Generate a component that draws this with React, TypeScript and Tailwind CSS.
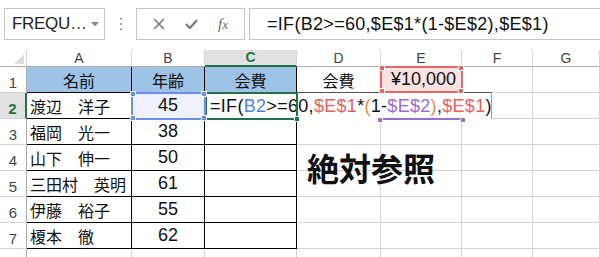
import React from "react";

const FONT = { fontFamily: '"Liberation Sans", "Noto Sans CJK JP", sans-serif' };
const JP = { fontFamily: '"Noto Sans CJK JP", "Liberation Sans", sans-serif' };

const COLS = ["A", "B", "C", "D", "E", "F", "G"];

const PEOPLE: [string, number][] = [
  ["渡辺　洋子", 45],
  ["福岡　光一", 38],
  ["山下　伸一", 50],
  ["三田村　英明", 61],
  ["伊藤　裕子", 55],
  ["榎本　徹", 62],
];

function Formula() {
  return (
    <>
      <span>=IF(</span>
      <span className="text-[#4f7fee]">B2</span>
      <span>&gt;=60,</span>
      <span className="text-[#ec5f5c]">$E$1</span>
      <span>*</span>
      <span className="text-[#e98a4f]">(</span>
      <span>1-</span>
      <span className="text-[#9a6bd3]">$E$2</span>
      <span className="text-[#e98a4f]">)</span>
      <span>,</span>
      <span className="text-[#ec5f5c]">$E$1</span>
      <span>)</span>
    </>
  );
}

// reference highlight box with square handles on its corners
function RefBox({ className, color, bottomOnly }: { className: string; color: string; bottomOnly?: boolean }) {
  const h = "absolute w-[6px] h-[6px] border border-white";
  return (
    <div className={"absolute " + className}>
      {!bottomOnly && <div className={h + " -left-[3px] -top-[3px]"} style={{ background: color }} />}
      {!bottomOnly && <div className={h + " -right-[3px] -top-[3px]"} style={{ background: color }} />}
      <div className={h + " -left-[3px] -bottom-[3px]"} style={{ background: color }} />
      <div className={h + " -right-[3px] -bottom-[3px]"} style={{ background: color }} />
    </div>
  );
}

function Toolbar() {
  return (
    <div className="flex items-start h-[50px] pt-[8px]" style={FONT}>
      <div className="ml-[4px] w-[101px] h-[32px] border border-[#c6c6c6] flex items-center pl-[7px] pr-[5px] justify-between">
        <span className="text-[17px] text-[#222] tracking-[-0.3px]">FREQU…</span>
        <svg width="8" height="5" viewBox="0 0 8 5"><path d="M0 0h8L4 4.5z" fill="#8a8a8a" /></svg>
      </div>
      <div className="w-[31px] h-[32px] flex flex-col items-center justify-center gap-[3px]">
        <div className="w-[2px] h-[2px] bg-[#a8a8a8]" />
        <div className="w-[2px] h-[2px] bg-[#a8a8a8]" />
        <div className="w-[2px] h-[2px] bg-[#a8a8a8]" />
      </div>
      <div className="w-[109px] h-[32px] border border-[#c6c6c6] flex items-center justify-around px-[6px]">
        <svg width="12" height="12" viewBox="0 0 12 12"><path d="M1 1l10 10M11 1L1 11" stroke="#7a7a7a" strokeWidth="1.6" /></svg>
        <svg width="13" height="10" viewBox="0 0 13 10"><path d="M1 5l4 4 7-8" stroke="#7a7a7a" strokeWidth="2.2" fill="none" /></svg>
        <span className="text-[15px] italic text-[#666]" style={{ fontFamily: '"Liberation Serif", serif' }}>f<span className="text-[13px]">x</span></span>
      </div>
      <div className="ml-[4px] flex-1 h-[32px] border border-r-0 border-[#c6c6c6] flex items-center pl-[17px] text-[18px] tracking-[0.3px] text-[#111] whitespace-nowrap">
        =IF(B2&gt;=60,$E$1*(1-$E$2),$E$1)
      </div>
    </div>
  );
}

export default function App() {
  const cells: React.ReactNode[] = [];

  // header row
  cells.push(
    <div key="corner" className="flex items-end justify-end p-[2px] border-r border-b border-r-[#d4d4d4] border-b-[#ababab] bg-white">
      <svg width="10" height="10" viewBox="0 0 10 10"><path d="M10 0v10H0z" fill="#dcdcdc" /></svg>
    </div>
  );
  COLS.forEach((c) => {
    const sel = c === "C";
    cells.push(
      <div
        key={"h" + c}
        className={
          "flex items-end justify-center pb-[1px] text-[14px] leading-none border-r border-r-[#d4d4d4] " +
          (sel ? "bg-[#e1e1e1] text-[#217346] font-bold border-b-2 border-b-[#217346]" : "bg-white text-[#444] border-b border-b-[#ababab]")
        }
      >
        {c}
      </div>
    );
  });

  for (let r = 1; r <= 8; r++) {
    const selRow = r === 2;
    cells.push(
      <div
        key={"r" + r}
        className={
          "flex items-end justify-center pb-[2px] text-[15px] leading-none border-b border-b-[#d4d4d4] " +
          (selRow ? "bg-[#e1e1e1] text-[#217346] font-bold border-r-2 border-r-[#217346]" : "bg-white text-[#444] border-r border-r-[#ababab]")
        }
      >
        {r <= 7 ? r : ""}
      </div>
    );
    COLS.forEach((c, ci) => {
      const inTable = ci <= 2 && r <= 7;
      let cls = "flex items-center text-[#111] ";
      cls += inTable ? "border-r border-b border-black " : "border-r border-b border-[#d4d4d4] ";
      let content: React.ReactNode = null;
      if (r === 1 && ci <= 2) {
        cls += "bg-[#9dc3e6] justify-center";
        content = <span className="text-[16px]" style={JP}>{["名前", "年齢", "会費"][ci]}</span>;
      } else if (r === 1 && c === "D") {
        cls += "justify-center";
        content = <span className="text-[16px]" style={JP}>会費</span>;
      } else if (r === 1 && c === "E") {
        cls += "bg-[#fbe2e2] justify-end pr-[5px]";
        content = <span className="text-[18px]">¥10,000</span>;
      } else if (r >= 2 && r <= 7 && c === "A") {
        cls += "pl-[3px]";
        content = <span className="text-[16px]" style={JP}>{PEOPLE[r - 2][0]}</span>;
      } else if (r >= 2 && r <= 7 && c === "B") {
        cls += "justify-center" + (r === 2 ? " bg-[#eef1fb]" : "");
        content = <span className="text-[18px]">{PEOPLE[r - 2][1]}</span>;
      }
      cells.push(
        <div key={c + r} className={cls}>
          {content}
        </div>
      );
    });
  }

  return (
    <div className="w-[600px] h-[257px] overflow-hidden bg-white" style={FONT}>
      <Toolbar />
      <div className="relative">
        <div className="grid grid-cols-[27px_105px_73px_92px_84px_81px_71px_67px] grid-rows-[17px_repeat(7,26px)_26px]">
          {cells}
        </div>

        {/* in-cell editor over C2, overflowing right */}
        <div className="absolute left-[205px] top-[42px] w-[287px] h-[27px] bg-white border-t border-t-[#555] border-r border-r-[#9a9a9a] flex items-center pl-[5px] text-[18px] tracking-[0.3px] text-[#111] whitespace-nowrap">
          <Formula />
        </div>
        {/* active cell C2 with fill handle */}
        <div className="absolute left-[205px] top-[42px] w-[93px] h-[28px] border-2 border-[#217346]">
          <div className="absolute -right-[4px] -bottom-[4px] w-[6px] h-[6px] bg-[#217346] border border-white" />
        </div>

        <RefBox className="left-[131px] top-[42px] w-[75px] h-[28px] border-2 border-[#6b8ef0]" color="#6b8ef0" />
        <RefBox className="left-[380px] top-[16px] w-[83px] h-[27px] border-2 border-[#e56868]" color="#e56868" />
        <RefBox className="left-[380px] top-[68px] w-[83px] h-[2px] bg-[#9a6bd3]" color="#9a6bd3" bottomOnly />

        {/* floating text box */}
        <div className="absolute left-[307px] top-[101px] text-[32px] font-semibold leading-none text-[#111]" style={JP}>
          絶対参照
        </div>
      </div>
    </div>
  );
}
